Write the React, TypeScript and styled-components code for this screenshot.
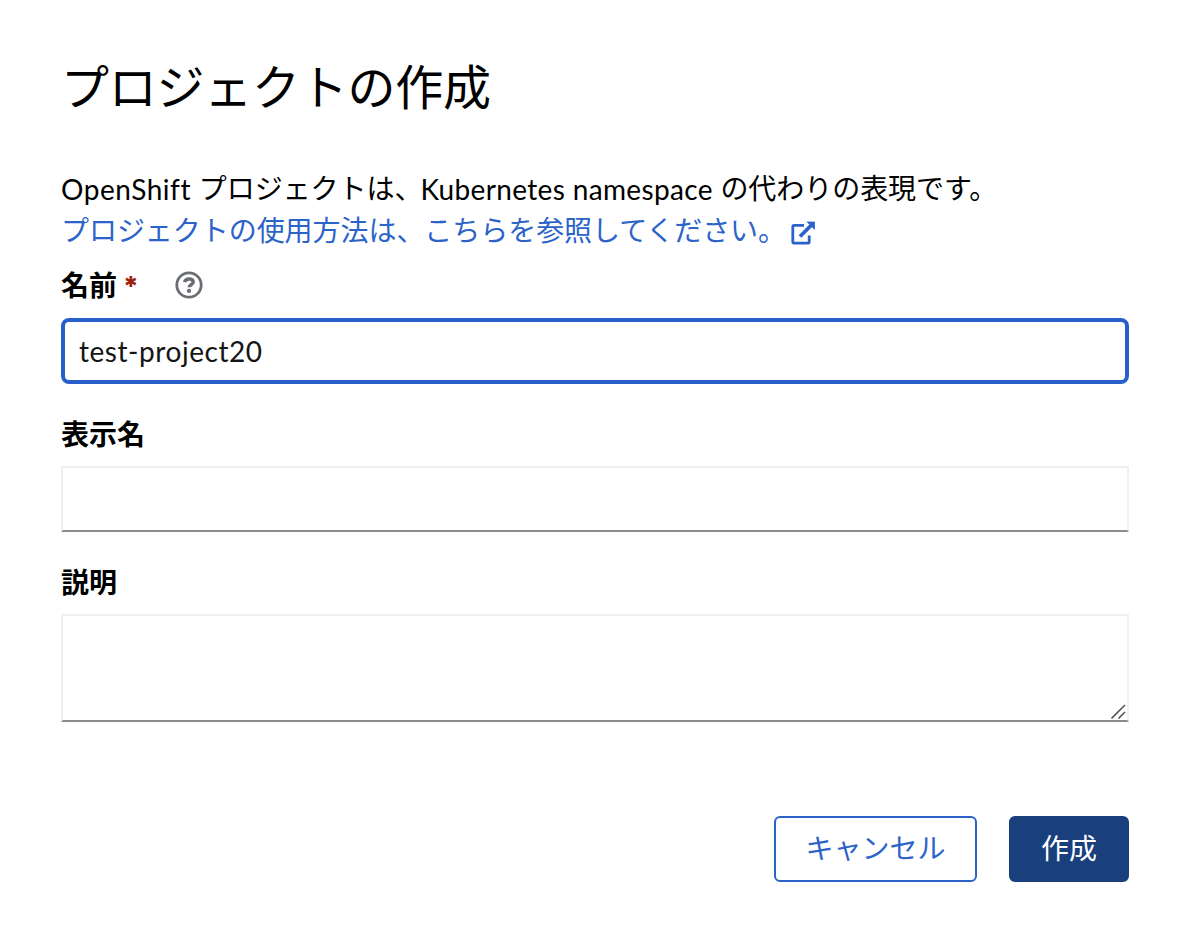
import React from "react";
import styled, { createGlobalStyle } from "styled-components";

const Global = createGlobalStyle`
  *, *::before, *::after { box-sizing: border-box; }
  body {
    margin: 0;
    background: #fff;
    color: #000;
    font: 28px/42px Lato, "Noto Sans CJK JP", sans-serif;
  }
`;

const Dialog = styled.form`
  display: flex;
  flex-direction: column;
  width: 1192px;
  height: 934px;
  padding: 47px 63px 0 61px;
`;

const Title = styled.h1`
  margin: 0;
  font-size: 48px;
  font-weight: 400;
  line-height: 80px;
  letter-spacing: -0.25px;
`;

const Intro = styled.p`
  margin: 40px 0 0;
  white-space: nowrap;
  letter-spacing: -0.05px;
`;

const Latin = styled.span<{ $spacing: number; $shift?: number }>`
  margin-left: ${(p) => p.$shift ?? 0}px;
  line-height: 1;
  vertical-align: -1px;
  letter-spacing: ${(p) => p.$spacing}px;
`;

const HelpLink = styled.a`
  display: flex;
  align-items: center;
  gap: 5px;
  color: #2b63c9;
  text-decoration: none;
`;

const LinkIcon = styled.svg`
  width: 24px;
  height: 24px;
  margin-top: 5px;
`;

const Field = styled.div<{ $gap: number }>`
  display: flex;
  flex-direction: column;
  margin-top: ${(p) => p.$gap}px;
`;

const LabelRow = styled.div<{ $gap?: number }>`
  display: flex;
  align-items: center;
  height: 42px;
  margin-bottom: ${(p) => p.$gap ?? 11}px;
`;

const Label = styled.label`
  font-weight: 700;
`;

const Required = styled.span`
  width: 13px;
  margin: 4px 0 0 6px;
  color: #a0200f;
  font: 800 27px/42px Inter, sans-serif;
`;

const HelpIcon = styled.svg`
  width: 28px;
  height: 28px;
  margin-left: 39px;
`;

const TextInput = styled.input<{ $active?: boolean }>`
  width: 100%;
  height: 66px;
  margin: 0;
  padding: 0 ${(p) => (p.$active ? 14 : 16)}px;
  border: ${(p) => (p.$active ? "4px solid #295fca" : "2px solid #f0f0f0")};
  ${(p) => !p.$active && "border-bottom-color: #8a8d90;"}
  border-radius: ${(p) => (p.$active ? 8 : 0)}px;
  outline: none;
  background: #fff;
  color: #151515;
  font: inherit;
  letter-spacing: 0.55px;
`;

const AreaWrap = styled.div`
  position: relative;
  display: flex;
`;

const TextArea = styled.textarea`
  width: 100%;
  height: 108px;
  margin: 0;
  padding: 8px 16px;
  border: 2px solid #f0f0f0;
  border-bottom-color: #8a8d90;
  border-radius: 0;
  outline: none;
  resize: none;
  background: #fff;
  font: inherit;
`;

const Grip = styled.svg`
  position: absolute;
  right: 3px;
  bottom: 3px;
  width: 15px;
  height: 15px;
`;

const Actions = styled.div`
  display: flex;
  justify-content: flex-end;
  gap: 32px;
  margin-top: 94px;
`;

const Button = styled.button<{ $primary?: boolean }>`
  width: ${(p) => (p.$primary ? 120 : 203)}px;
  height: 66px;
  padding: 0 0 2px;
  border: 2px solid ${(p) => (p.$primary ? "#193f7c" : "#2b63c9")};
  border-radius: 6px;
  background: ${(p) => (p.$primary ? "#193f7c" : "#fff")};
  color: ${(p) => (p.$primary ? "#fff" : "#2b63c9")};
  font: inherit;
`;

export default function App() {
  return (
    <>
      <Global />
      <Dialog>
        <Title>プロジェクトの作成</Title>
        <Intro>
          <Latin $spacing={0.55}>OpenShift </Latin>プロジェクトは、
          <Latin $spacing={0.35} $shift={-2}>Kubernetes namespace </Latin>の代わりの表現です。
          <HelpLink>
            プロジェクトの使用方法は、こちらを参照してください。
            <LinkIcon viewBox="0 0 24 24" fill="none" stroke="currentColor">
              <path d="M13 4.4H2.8a1 1 0 0 0-1 1v15.8a1 1 0 0 0 1 1h14.4a1 1 0 0 0 1-1V14.5" strokeWidth="2.8" />
              <path d="M9 15.5 20.5 4" strokeWidth="3.8" />
              <path d="M16.2 1h7.3v7.3z" fill="currentColor" strokeWidth=".8" strokeLinejoin="round" />
            </LinkIcon>
          </HelpLink>
        </Intro>
        <Field $gap={13}>
          <LabelRow $gap={12}>
            <Label htmlFor="name">名前</Label>
            <Required>*</Required>
            <HelpIcon viewBox="0 0 28 28" fill="none" stroke="#6a6e73">
              <circle cx="14" cy="14" r="12.2" strokeWidth="2.8" />
              <path d="M9.6 11.1c.6-2.3 2.3-3.2 4.4-3.2 2.5 0 4.2 1.2 4.2 3.1 0 2.7-4 2.6-4 5.2" strokeWidth="3.5" />
              <circle cx="14" cy="19.9" r="2.1" fill="#6a6e73" stroke="none" />
            </HelpIcon>
          </LabelRow>
          <TextInput id="name" $active defaultValue="test-project20" />
        </Field>
        <Field $gap={29}>
          <LabelRow>
            <Label htmlFor="display-name">表示名</Label>
          </LabelRow>
          <TextInput id="display-name" />
        </Field>
        <Field $gap={29}>
          <LabelRow>
            <Label htmlFor="description">説明</Label>
          </LabelRow>
          <AreaWrap>
            <TextArea id="description" />
            <Grip viewBox="0 0 15 15" stroke="#555" strokeWidth="1.6">
              <path d="M.5 14.5 14 1M7.5 14.5l6.5-6.5" />
            </Grip>
          </AreaWrap>
        </Field>
        <Actions>
          <Button type="button">キャンセル</Button>
          <Button type="button" $primary>作成</Button>
        </Actions>
      </Dialog>
    </>
  );
}
